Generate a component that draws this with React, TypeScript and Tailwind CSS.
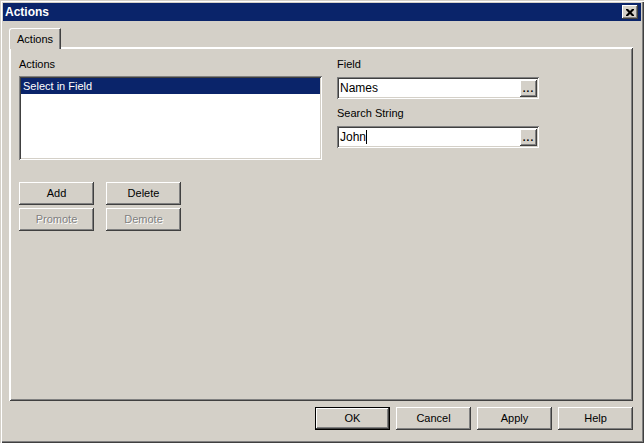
const raised =
  'shadow-[inset_-1px_-1px_#404040,inset_1px_1px_#ffffff,inset_-2px_-2px_#808080]';
const sunken =
  'shadow-[inset_1px_1px_#808080,inset_-1px_-1px_#ffffff,inset_2px_2px_#404040,inset_-2px_-2px_#d4d0c8]';

function Button({ label, disabled, isDefault }: { label: string; disabled?: boolean; isDefault?: boolean }) {
  if (isDefault) {
    return (
      <div className="w-[75px] h-[23px] border border-black">
        <div className={`w-full h-full flex items-center justify-center bg-[#d4d0c8] ${raised}`}>{label}</div>
      </div>
    );
  }
  return (
    <div
      className={`w-[75px] h-[23px] flex items-center justify-center bg-[#d4d0c8] ${raised} ${
        disabled ? 'text-[#808080] [text-shadow:1px_1px_#ffffff]' : ''
      }`}
    >
      {label}
    </div>
  );
}

function BrowseField({ value, caret }: { value: string; caret?: boolean }) {
  return (
    <div className={`w-[202px] h-[22px] bg-white flex items-center pl-[3px] pr-[2px] ${sunken}`}>
      <span className="flex-1 flex items-center text-[12px]">
        {value}
        {caret && <span className="inline-block w-px h-[14px] bg-black" />}
      </span>
      <div className={`w-[17px] h-[17px] bg-[#d4d0c8] flex items-end justify-center pb-[3px] ${raised}`}>
        <span className="font-bold text-[10px] leading-none tracking-[1px]">...</span>
      </div>
    </div>
  );
}

export default function App() {
  return (
    <div
      className="w-[644px] h-[443px] bg-[#d4d0c8] p-[3px] flex flex-col text-[11px] leading-[13px] text-black font-['Liberation_Sans',Arial,sans-serif] shadow-[inset_1px_1px_#d4d0c8,inset_2px_2px_#ffffff,inset_-1px_-1px_#404040,inset_-2px_-2px_#808080]"
    >
      {/* title bar */}
      <div className="h-[18px] bg-[#0a246a] flex items-center justify-between pl-[2px] pr-[3px]">
        <span className="text-white font-bold text-[12px]">Actions</span>
        <div className={`w-[16px] h-[14px] bg-[#d4d0c8] flex items-center justify-center ${raised}`}>
          <svg width="8" height="7" viewBox="0 0 8 7">
            <path d="M0 0h2l2 2 2-2h2v1L5.5 3.5 8 6v1H6L4 5 2 7H0V6l2.5-2.5L0 1z" fill="#000" />
          </svg>
        </div>
      </div>

      <div className="flex-1 flex flex-col pl-[6px] pr-[8px] pt-[7px]">
        {/* tab */}
        <div className="flex">
          <div className="relative z-10 -mb-[2px] h-[21px] px-[7px] pt-[4px] bg-[#d4d0c8] border-l border-t border-white rounded-tl-[3px] border-r border-r-[#404040] shadow-[inset_-1px_0_#808080]">
            Actions
          </div>
        </div>

        {/* panel */}
        <div className={`h-[354px] bg-[#d4d0c8] border-t border-l border-white ${raised} flex gap-[15px] pl-[9px] pt-[10px]`}>
          <div className="flex flex-col w-[303px]">
            <span>Actions</span>
            <div className={`mt-[5px] h-[84px] bg-white p-[2px] ${sunken}`}>
              <div className="h-[16px] bg-[#0a246a] text-white pl-[2px] flex items-center">Select in Field</div>
            </div>
            <div className="mt-[22px] flex gap-[12px]">
              <Button label="Add" />
              <Button label="Delete" />
            </div>
            <div className="mt-[3px] flex gap-[12px]">
              <Button label="Promote" disabled />
              <Button label="Demote" disabled />
            </div>
          </div>
          <div className="flex flex-col">
            <span>Field</span>
            <div className="mt-[6px]">
              <BrowseField value="Names" />
            </div>
            <span className="mt-[8px]">Search String</span>
            <div className="mt-[6px]">
              <BrowseField value="John" caret />
            </div>
          </div>
        </div>

        {/* bottom buttons */}
        <div className="mt-[6px] flex justify-end gap-[6px]">
          <Button label="OK" isDefault />
          <Button label="Cancel" />
          <Button label="Apply" />
          <Button label="Help" />
        </div>
      </div>
    </div>
  );
}
